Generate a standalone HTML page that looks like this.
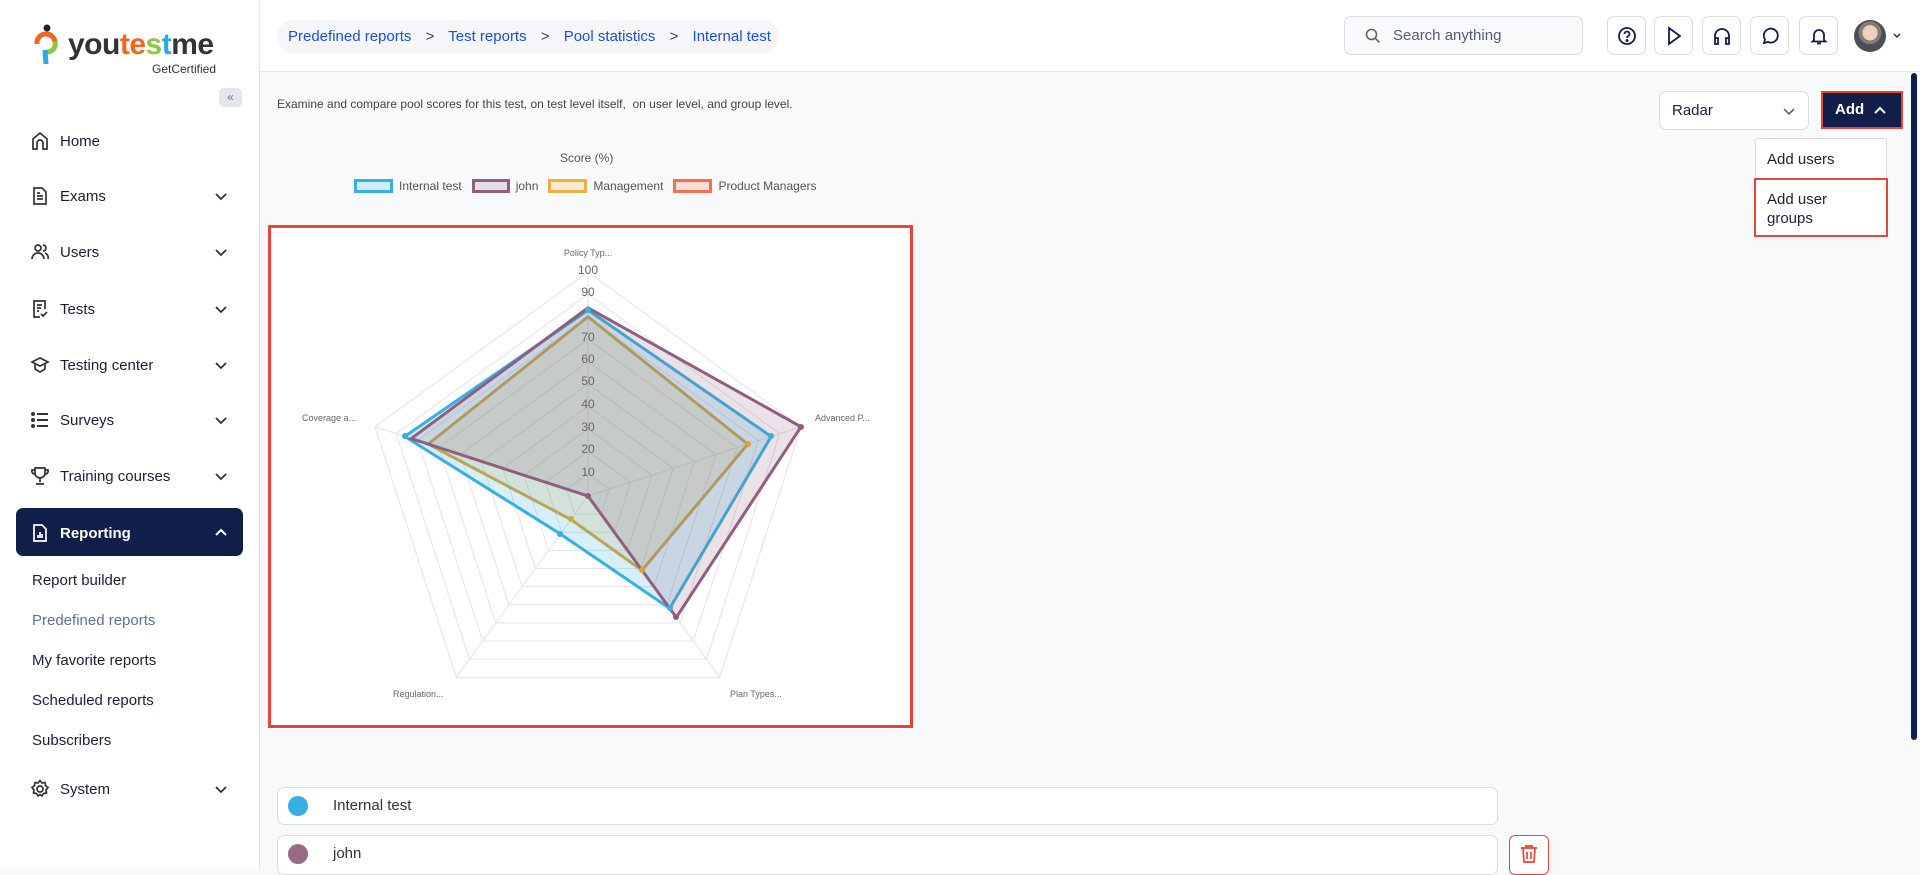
<!DOCTYPE html>
<html><head><meta charset="utf-8">
<style>
*{box-sizing:border-box;margin:0;padding:0}
body{width:1920px;height:869px;overflow:hidden;font-family:"Liberation Sans",sans-serif;background:#f8f9fb;position:relative;color:#1a1f36}
.side{position:absolute;left:0;top:0;width:260px;height:869px;background:#fff;border-right:1px solid #e3e6ec}
.hdr{position:absolute;left:260px;top:0;right:0;height:72px;background:#fff;border-bottom:1px solid #e3e6ec}
.abs{position:absolute}
.nav{position:absolute;left:30px;font-size:15px;color:#1a1f36;display:flex;align-items:center}
.nav svg{margin-right:10px}
.chev{position:absolute;left:214px}
.sub{position:absolute;left:32px;font-size:15px;color:#1a1f36}
.ib{position:absolute;top:16px;width:39px;height:39px;border:1px solid #d9dde4;border-radius:7px;background:#fff;display:flex;align-items:center;justify-content:center}
</style></head><body>
<div class="side">
  <div class="abs" style="left:34px;top:24px">
    <svg width="26" height="42" viewBox="0 0 26 42"><circle cx="13" cy="4" r="3.5" fill="#222"/><path d="M3 20 A9 9 0 0 1 21 18" stroke="#f26522" stroke-width="5" fill="none"/><path d="M21 18 A8 8 0 0 1 13 28" stroke="#8dc63f" stroke-width="5" fill="none"/><path d="M11 26 L12 40" stroke="#29abe2" stroke-width="5"/></svg>
  </div>
  <div class="abs" style="left:68px;top:28px;font-size:30px;font-weight:bold;letter-spacing:-0.5px;color:#333"><span>you</span><span style="color:#f26522">te</span><span style="color:#8dc63f">s</span><span style="color:#29abe2">t</span><span>me</span></div>
  <div class="abs" style="left:152px;top:62px;font-size:12px;color:#333">GetCertified</div>
  <div class="abs" style="left:219px;top:88px;width:23px;height:19px;background:#e3e6ec;border-radius:5px;font-size:12px;color:#777;text-align:center;line-height:18px">«</div>

  <div class="nav" style="top:131px"><svg width="20" height="20" viewBox="0 0 20 20" fill="none" stroke="#333" stroke-width="1.7"><path d="M3 18V8l7-6 7 6v10h-4v-6a3 3 0 0 0-6 0v6z"/></svg>Home</div>
  <div class="nav" style="top:186px"><svg width="20" height="20" viewBox="0 0 20 20" fill="none" stroke="#333" stroke-width="1.7"><path d="M4 2h8l4 4v12H4z M7 10h6 M7 13h6 M7 7h3"/></svg>Exams</div>
  <div class="nav" style="top:242px"><svg width="20" height="20" viewBox="0 0 20 20" fill="none" stroke="#333" stroke-width="1.7"><circle cx="8" cy="6" r="3"/><path d="M2 17a6 6 0 0 1 12 0 M13 3a3 3 0 0 1 0 6 M15 11a5 5 0 0 1 3 6"/></svg>Users</div>
  <div class="nav" style="top:299px"><svg width="20" height="20" viewBox="0 0 20 20" fill="none" stroke="#333" stroke-width="1.7"><path d="M15 10V2H4v16h6 M7 6h5 M7 9h4 M7 12h2 M11 15l2 2 4-4"/></svg>Tests</div>
  <div class="nav" style="top:355px"><svg width="20" height="20" viewBox="0 0 20 20" fill="none" stroke="#333" stroke-width="1.7"><path d="M2 7l8-4 8 4-8 4z M5 9v5l5 3 5-3V9"/></svg>Testing center</div>
  <div class="nav" style="top:410px"><svg width="20" height="20" viewBox="0 0 20 20" fill="none" stroke="#333" stroke-width="2"><path d="M7 4h11 M7 10h11 M7 16h11"/><circle cx="3" cy="4" r="1" fill="#333"/><circle cx="3" cy="10" r="1" fill="#333"/><circle cx="3" cy="16" r="1" fill="#333"/></svg>Surveys</div>
  <div class="nav" style="top:466px"><svg width="20" height="20" viewBox="0 0 20 20" fill="none" stroke="#333" stroke-width="1.7"><path d="M5 2h10v5a5 5 0 0 1-10 0z M5 4H2a3 3 0 0 0 3 4 M15 4h3a3 3 0 0 1-3 4 M10 12v4 M6 18h8"/></svg>Training courses</div>
  <svg class="chev" style="top:191px" width="14" height="10" viewBox="0 0 14 10" fill="none" stroke="#333" stroke-width="1.8"><path d="M2 3l5 5 5-5"/></svg>
  <svg class="chev" style="top:247px" width="14" height="10" viewBox="0 0 14 10" fill="none" stroke="#333" stroke-width="1.8"><path d="M2 3l5 5 5-5"/></svg>
  <svg class="chev" style="top:304px" width="14" height="10" viewBox="0 0 14 10" fill="none" stroke="#333" stroke-width="1.8"><path d="M2 3l5 5 5-5"/></svg>
  <svg class="chev" style="top:360px" width="14" height="10" viewBox="0 0 14 10" fill="none" stroke="#333" stroke-width="1.8"><path d="M2 3l5 5 5-5"/></svg>
  <svg class="chev" style="top:415px" width="14" height="10" viewBox="0 0 14 10" fill="none" stroke="#333" stroke-width="1.8"><path d="M2 3l5 5 5-5"/></svg>
  <svg class="chev" style="top:471px" width="14" height="10" viewBox="0 0 14 10" fill="none" stroke="#333" stroke-width="1.8"><path d="M2 3l5 5 5-5"/></svg>

  <div class="abs" style="left:16px;top:508px;width:227px;height:48px;background:#111e4a;border-radius:7px"></div>
  <div class="nav" style="top:523px;color:#fff;font-weight:bold"><svg width="20" height="20" viewBox="0 0 20 20" fill="none" stroke="#fff" stroke-width="1.7"><path d="M4 2h8l4 4v12H4z M8 15v-3 M10 15v-6 M12 15v-4"/></svg>Reporting</div>
  <svg class="chev" style="top:527px" width="14" height="10" viewBox="0 0 14 10" fill="none" stroke="#fff" stroke-width="2"><path d="M2 8l5-5 5 5"/></svg>
  <div class="sub" style="top:572px">Report builder</div>
  <div class="sub" style="top:612px;color:#5f6f9e">Predefined reports</div>
  <div class="sub" style="top:652px">My favorite reports</div>
  <div class="sub" style="top:692px">Scheduled reports</div>
  <div class="sub" style="top:732px">Subscribers</div>
  <div class="nav" style="top:779px"><svg width="20" height="20" viewBox="0 0 20 20" fill="none" stroke="#333" stroke-width="1.7"><circle cx="10" cy="10" r="3"/><path d="M10 1.5l2 2.5 3-.5 .5 3 2.5 2-2 2.5.5 3-3 .5-1.5 2.5-2-1.5-2 1.5-1.5-2.5-3-.5.5-3-2-2.5 2.5-2 .5-3 3 .5z"/></svg>System</div>
  <svg class="chev" style="top:784px" width="14" height="10" viewBox="0 0 14 10" fill="none" stroke="#333" stroke-width="1.8"><path d="M2 3l5 5 5-5"/></svg>
</div>

<div class="hdr"></div>
<div class="abs" style="left:277px;top:20px;width:502px;height:34px;background:#f4f6fa;border-radius:17px;font-size:15px;color:#1d4fd8;line-height:34px;padding-left:11px;white-space:nowrap">Predefined reports <span style="color:#444;margin:0 10px">&gt;</span> Test reports <span style="color:#444;margin:0 10px">&gt;</span> Pool statistics <span style="color:#444;margin:0 10px">&gt;</span> Internal test</div>
<div class="abs" style="left:1344px;top:16px;width:239px;height:39px;border:1px solid #d9dde4;border-radius:7px;background:#f8f9fb;font-size:15px;color:#555c6e;line-height:37px;padding-left:48px">Search anything
<svg class="abs" style="left:20px;top:11px" width="16" height="16" viewBox="0 0 16 16" fill="none" stroke="#666" stroke-width="1.6"><circle cx="6.5" cy="6.5" r="5"/><path d="M10.5 10.5l4 4"/></svg></div>
<div class="ib" style="left:1607px"><svg width="20" height="20" viewBox="0 0 20 20" fill="none" stroke="#111e4a" stroke-width="1.8"><circle cx="10" cy="10" r="8"/><path d="M7.5 8a2.5 2.5 0 1 1 3.5 2.3c-.7.4-1 .9-1 1.7"/><circle cx="10" cy="14.5" r=".6" fill="#111e4a"/></svg></div>
<div class="ib" style="left:1654px"><svg width="20" height="20" viewBox="0 0 20 20" fill="none" stroke="#111e4a" stroke-width="1.8"><path d="M5 2l11 8-11 8z"/></svg></div>
<div class="ib" style="left:1702px"><svg width="20" height="20" viewBox="0 0 20 20" fill="none" stroke="#111e4a" stroke-width="1.8"><path d="M3 14v-4a7 7 0 0 1 14 0v4 M3 12h3v6H3z M14 12h3v6h-3z"/></svg></div>
<div class="ib" style="left:1750px"><svg width="20" height="20" viewBox="0 0 20 20" fill="none" stroke="#111e4a" stroke-width="1.8"><path d="M4 17l1-3.5A7 7 0 1 1 8 16z"/></svg></div>
<div class="ib" style="left:1799px"><svg width="20" height="20" viewBox="0 0 20 20" fill="none" stroke="#111e4a" stroke-width="1.8"><path d="M5 14V9a5 5 0 0 1 10 0v5l1.5 1.5h-13z M8 17.5h4"/></svg></div>
<div class="abs" style="left:1854px;top:20px;width:32px;height:32px;border-radius:50%;background:radial-gradient(circle at 50% 40%,#e9d2c4 0 30%,#8a7a72 31% 45%,#4a4e58 46%)"></div>
<svg class="abs" style="left:1892px;top:32px" width="10" height="8" viewBox="0 0 10 8" fill="none" stroke="#333" stroke-width="1.5"><path d="M2 2l3 3 3-3"/></svg>

<div class="abs" style="left:277px;top:97px;font-size:12px;color:#444">Examine and compare pool scores for this test, on test level itself,&nbsp; on user level, and group level.</div>

<div class="abs" style="left:1659px;top:91px;width:150px;height:39px;border:1px solid #d9dde4;border-radius:7px;background:#fff;font-size:15px;line-height:37px;padding-left:12px">Radar
<svg class="abs" style="left:122px;top:14px" width="14" height="10" viewBox="0 0 14 10" fill="none" stroke="#666" stroke-width="1.6"><path d="M2 3l5 5 5-5"/></svg></div>
<div class="abs" style="left:1821px;top:91px;width:82px;height:38px;background:#111e4a;border:2px solid #e8443a;color:#fff;font-weight:bold;font-size:15px;line-height:34px;padding-left:12px">Add
<svg class="abs" style="left:50px;top:12px" width="14" height="10" viewBox="0 0 14 10" fill="none" stroke="#fff" stroke-width="2"><path d="M2 8l5-5 5 5"/></svg></div>
<div class="abs" style="left:1755px;top:138px;width:132px;height:98px;background:#fff;border:1px solid #d9dde4;border-radius:3px"></div>
<div class="abs" style="left:1767px;top:151px;font-size:15px">Add users</div>
<div class="abs" style="left:1754px;top:178px;width:134px;height:59px;border:2px solid #e8443a;background:#fff;font-size:15px;padding:10px 0 0 11px;line-height:19px">Add user<br>groups</div>
<div class="abs" style="left:1911px;top:73px;width:6px;height:667px;background:#111e4a;border-radius:3px"></div>

<div class="abs" style="left:560px;top:151px;font-size:12px;color:#555">Score (%)</div>
<div class="abs" style="left:354px;top:179px;font-size:12px;color:#555;display:flex;align-items:center;white-space:nowrap">
<span style="display:inline-block;width:39px;height:14px;border:3px solid #36b0e0;background:#d3ebf6;margin-right:6px"></span>Internal test
<span style="display:inline-block;width:38px;height:14px;border:3px solid #8e5f7f;background:#e6dbe3;margin:0 6px 0 10px"></span>john
<span style="display:inline-block;width:39px;height:14px;border:3px solid #eab040;background:#f7ecd3;margin:0 6px 0 10px"></span>Management
<span style="display:inline-block;width:39px;height:14px;border:3px solid #f07050;background:#f9dcd5;margin:0 6px 0 10px"></span>Product Managers</div>

<div class="abs" style="left:268px;top:225px;width:645px;height:503px;border:3px solid #e8443a;background:#fff"></div>
<svg class="abs" style="left:0;top:0" width="1920" height="869">
<defs><polygon id="p" points="0,-1 0.951,-0.309 0.588,0.809 -0.588,0.809 -0.951,-0.309" fill="none" stroke="#e4e4e4" stroke-width="1" vector-effect="non-scaling-stroke"/></defs>
<g transform="translate(588,496)">
<use href="#p" transform="scale(22.4)"/><use href="#p" transform="scale(44.8)"/><use href="#p" transform="scale(67.2)"/><use href="#p" transform="scale(89.6)"/><use href="#p" transform="scale(112)"/><use href="#p" transform="scale(134.4)"/><use href="#p" transform="scale(156.8)"/><use href="#p" transform="scale(179.2)"/><use href="#p" transform="scale(201.6)"/><use href="#p" transform="scale(224)"/>
<g stroke="#e4e4e4"><line x1="0" y1="0" x2="0" y2="-224"/><line x1="0" y1="0" x2="213" y2="-69.2"/><line x1="0" y1="0" x2="131.7" y2="181.2"/><line x1="0" y1="0" x2="-131.7" y2="181.2"/><line x1="0" y1="0" x2="-213" y2="-69.2"/></g>
</g>
<polygon points="588,316.8 747.8,444.1 642,570.3 570.9,519.5 428.2,444.1" fill="rgba(224,176,64,0.2)" stroke="#d6a43a" stroke-width="3"/>
<polygon points="588,310.1 771.2,436.5 669.7,608.4 560.4,534 404.8,436.5" fill="rgba(54,176,224,0.2)" stroke="#36b0e0" stroke-width="3"/>
<polygon points="588,307.8 801,426.8 676.3,617.4 588,496 411.2,438.6" fill="rgba(142,95,127,0.18)" stroke="#8e5f7f" stroke-width="3"/>
<g fill="#36b0e0"><circle cx="588" cy="310" r="3"/><circle cx="771" cy="436" r="3"/><circle cx="670" cy="608" r="3"/><circle cx="560" cy="534" r="3"/><circle cx="405" cy="436" r="3"/></g>
<g fill="#8e5f7f"><circle cx="801" cy="427" r="3"/><circle cx="676" cy="617" r="3"/><circle cx="588" cy="496" r="3"/></g>
<g fill="#d6a43a"><circle cx="748" cy="444" r="3"/><circle cx="642" cy="570" r="3"/><circle cx="571" cy="519" r="3"/></g>
<g font-family="Liberation Sans" font-size="12" fill="#666" text-anchor="middle">
<text x="588" y="274">100</text><text x="588" y="296">90</text><text x="588" y="341">70</text><text x="588" y="363">60</text><text x="588" y="385">50</text><text x="588" y="408">40</text><text x="588" y="431">30</text><text x="588" y="453">20</text><text x="588" y="476">10</text>
</g>
<g font-family="Liberation Sans" font-size="9" fill="#666">
<text x="588" y="256" text-anchor="middle">Policy Typ...</text>
<text x="815" y="421">Advanced P...</text>
<text x="730" y="697">Plan Types...</text>
<text x="393" y="697">Regulation...</text>
<text x="302" y="421">Coverage a...</text>
</g>
</svg>

<div class="abs" style="left:277px;top:787px;width:1221px;height:38px;background:#fff;border:1px solid #d9dde4;border-radius:7px;font-size:15px;line-height:36px;padding-left:55px;color:#333">Internal test
<div class="abs" style="left:10px;top:8px;width:20px;height:20px;border-radius:50%;background:#36b0e0"></div></div>
<div class="abs" style="left:277px;top:835px;width:1221px;height:40px;background:#fff;border:1px solid #d9dde4;border-radius:7px;font-size:15px;line-height:36px;padding-left:55px;color:#333">john
<div class="abs" style="left:10px;top:8px;width:20px;height:20px;border-radius:50%;background:#976a86"></div></div>
<div class="abs" style="left:1509px;top:835px;width:40px;height:40px;background:#fff;border:1px solid #e8443a;border-radius:6px">
<svg class="abs" style="left:10px;top:8px" width="18" height="20" viewBox="0 0 18 20" fill="none" stroke="#e8443a" stroke-width="1.7"><path d="M1 4h16 M6 4V2h6v2 M3 4l1 14h10l1-14 M7 8v7 M11 8v7"/></svg></div>
</body></html>
